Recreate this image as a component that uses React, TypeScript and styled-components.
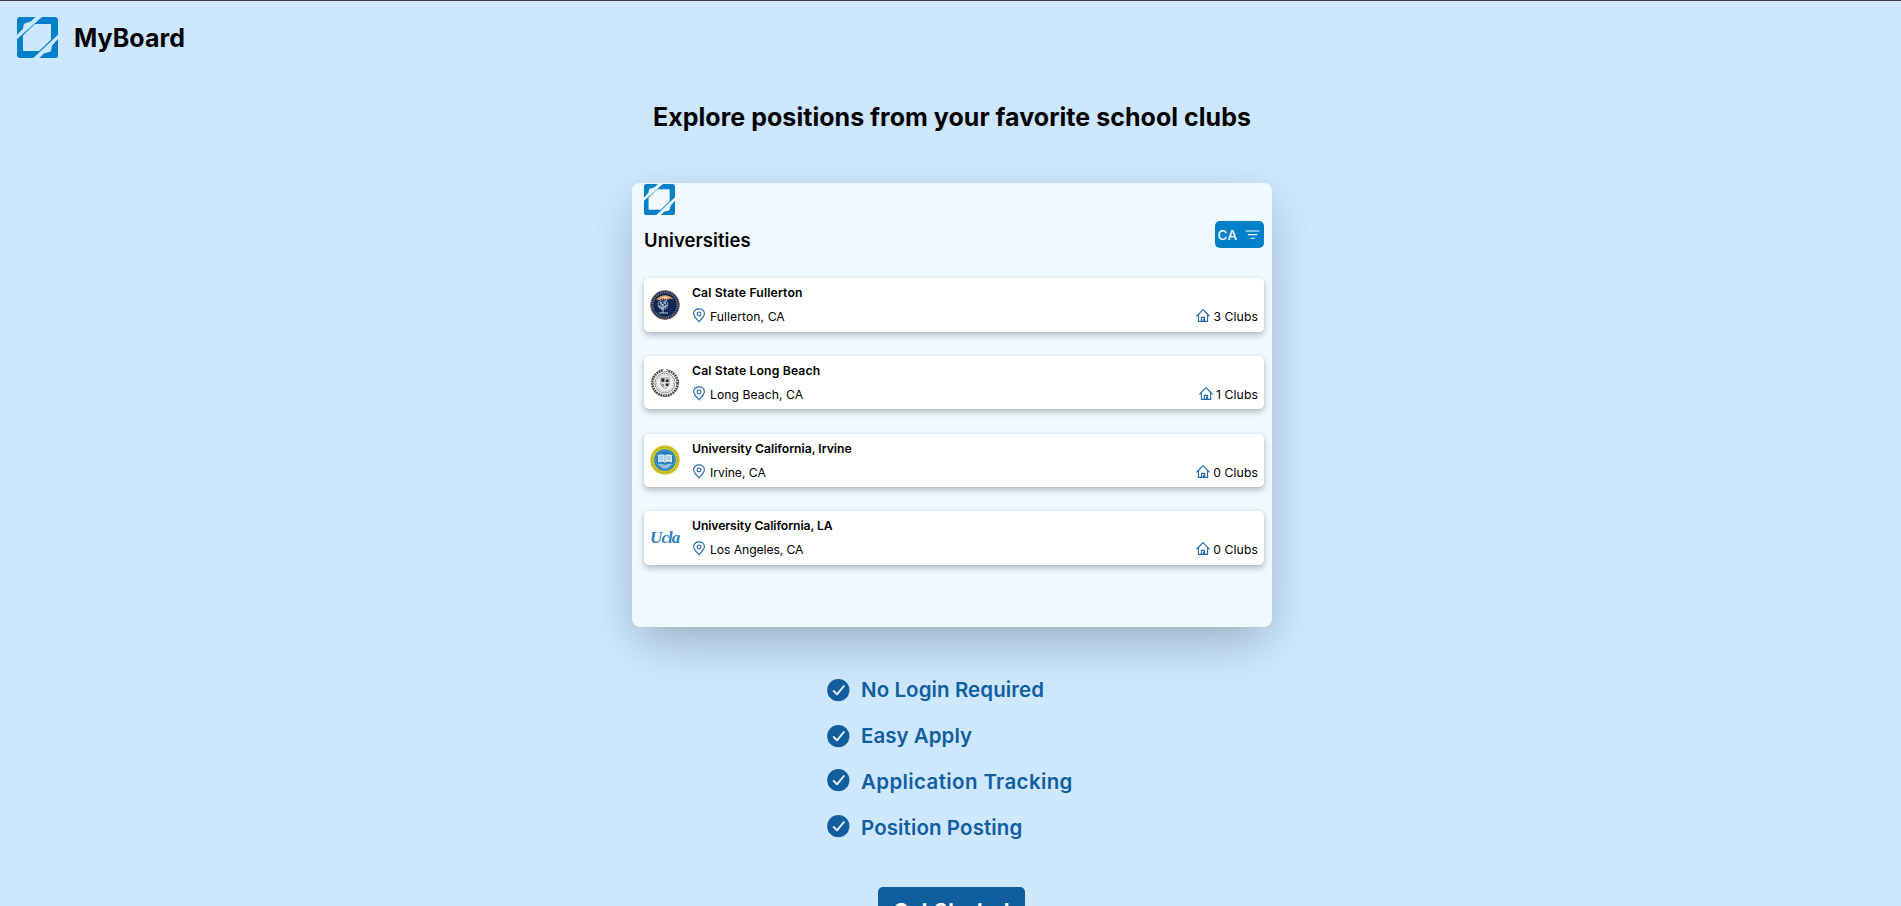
import React from "react";
import styled, { createGlobalStyle } from "styled-components";

const brand = "#0080c9";
const navy = "#115e9f";

const GlobalStyle = createGlobalStyle`
  * { box-sizing: border-box; }
  body {
    margin: 0;
    background: #cde7ff;
    font-family: Inter, "Liberation Sans", sans-serif;
    color: #000;
  }
  svg { display: block; }
`;

const Page = styled.div`
  height: 100vh;
  overflow: hidden;
  border-top: 1px solid #3b3f46;
`;

const Header = styled.header`
  display: flex;
  align-items: center;
  gap: 16.5px;
  padding: 16px 16.5px;
`;

const BrandName = styled.span`
  font-size: 25px;
  line-height: 36px;
  font-weight: 700;
  letter-spacing: 0.05px;
`;

const Main = styled.main`
  display: flex;
  flex-direction: column;
  align-items: center;
  padding-left: 3px;
`;

const Headline = styled.h1`
  margin: 25px 0 48px;
  font-size: 25px;
  line-height: 36px;
  font-weight: 700;
  letter-spacing: 0.03px;
`;

const Preview = styled.section`
  width: 640px;
  height: 444px;
  flex: none;
  padding: 0.5px 8px 0 12px;
  border-radius: 8px;
  background: #f0f9ff;
  box-shadow: 0 25px 50px -12px rgba(0, 0, 0, 0.18), 0 10px 40px rgba(0, 0, 0, 0.1);
`;

const PreviewHead = styled.div`
  display: flex;
  justify-content: space-between;
  align-items: flex-start;
  height: 39px;
  margin: 6.5px 0 18px;
`;

const PreviewTitle = styled.h2`
  margin: 0;
  font-size: 18.5px;
  line-height: 39px;
  font-weight: 600;
  letter-spacing: 0.05px;
`;

const StateFilter = styled.button`
  display: flex;
  align-items: center;
  justify-content: space-between;
  width: 49.5px;
  height: 27px;
  padding: 0 4px 0 3px;
  border: 0;
  border-radius: 5px;
  background: ${brand};
  color: #fff;
  font: 500 13.5px Inter, sans-serif;
  letter-spacing: 0.4px;
`;

const SchoolList = styled.div`
  display: grid;
  gap: 24.2px;
`;

const SchoolCard = styled.article`
  display: flex;
  gap: 12px;
  height: 53.6px;
  padding: 0 6px;
  border-radius: 5px;
  background: #fff;
  box-shadow: 0 3px 6px rgba(0, 0, 0, 0.26), 0 0 3px rgba(0, 0, 0, 0.05);
`;

const Emblem = styled.div`
  display: flex;
  align-items: center;
  width: 30px;
`;

const Script = styled.span`
  font: italic 700 17px "Liberation Serif", serif;
  letter-spacing: -0.9px;
  color: #2c7fbd;
`;

const Details = styled.div`
  flex: 1;
  padding-top: 3px;
`;

const SchoolName = styled.h3<{ $tracking: number }>`
  margin: 0;
  font-size: 12.2px;
  line-height: 24px;
  font-weight: 600;
  letter-spacing: ${(p) => p.$tracking}px;
`;

const Meta = styled.div`
  display: flex;
  justify-content: space-between;
`;

const MetaItem = styled.span<{ $gap: number; $tracking: number }>`
  display: flex;
  gap: ${(p) => p.$gap}px;
  font-size: 12.2px;
  line-height: 24px;
  letter-spacing: ${(p) => p.$tracking}px;
  white-space: nowrap;

  svg { margin-top: 3px; }
`;

const Perks = styled.ul`
  display: grid;
  gap: 16px;
  width: 250px;
  margin: 48px 0 44px;
  padding: 0;
  list-style: none;
`;

const Perk = styled.li<{ $tracking: number; $lift: number }>`
  display: flex;
  gap: 11px;
  font-size: 20.5px;
  line-height: 30px;
  font-weight: 600;
  letter-spacing: ${(p) => p.$tracking}px;
  color: ${navy};
  white-space: nowrap;

  svg {
    flex: none;
    margin-top: ${(p) => 4 - p.$lift}px;
  }
`;

const StartButton = styled.button`
  flex: none;
  width: 147px;
  height: 46px;
  margin-right: 1px;
  padding: 0;
  border: 0;
  border-radius: 5px;
  background: ${navy};
  color: #fff;
  font: 700 20.5px Inter, sans-serif;
  letter-spacing: 0.2px;
`;

const Logo = ({ size }: { size: number }) => (
  <svg width={size} height={size} viewBox="0 0 123 123">
    <g fill={brand}>
      <path d="M10 0H55L43 12C34 17 27 17 22 20C18 24 20 31 17 36L0 54V10Q0 0 10 0Z" />
      <path
        fillRule="evenodd"
        d="M75 0H113Q123 0 123 10V53L49 123H10Q0 123 0 113V66ZM54 21L18 55V102H66L102 68V21Z"
      />
      <path d="M123 66V113Q123 123 113 123H67L79 111C88 105 96 108 101 103C105 98 102 91 106 85Z" />
      <rect x="120" y="121" width="3" height="2" opacity=".5" />
    </g>
  </svg>
);

const FilterIcon = () => (
  <svg width="15" height="10" viewBox="0 0 15 10" stroke="#fff" strokeWidth="1.1" strokeLinecap="round">
    <path d="M1 1H14M3.2 4.6H11.8M5.8 8.2H9.2" />
  </svg>
);

const PinIcon = () => (
  <svg width="14" height="15" viewBox="0 0 14 15" fill="none" stroke="#2369ad" strokeWidth="1.15">
    <path d="M7 13.8C4.6 11.1 1.6 8.4 1.6 5.7C1.6 2.8 4 .9 7 .9S12.4 2.8 12.4 5.7C12.4 8.4 9.4 11.1 7 13.8Z" strokeLinejoin="round" />
    <circle cx="7" cy="5.9" r="1.9" />
  </svg>
);

const HomeIcon = () => (
  <svg width="14" height="15" viewBox="0 0 14 15" fill="none" stroke="#2369ad" strokeWidth="1.1" strokeLinejoin="round" strokeLinecap="round">
    <path d="M.8 8L7 1.7L13.2 8M2.4 6.6V13.4H11.6V6.6M5.4 13.2V9.4H8.6V13.2M7.4 11V13" />
  </svg>
);

const CheckIcon = () => (
  <svg width="23" height="23" viewBox="0 0 23 23">
    <circle cx="11.3" cy="11.2" r="11.1" fill={navy} />
    <path d="M6.7 12L10 15.3L16.8 7.1" fill="none" stroke="#e4f2ff" strokeWidth="1.9" strokeLinecap="round" strokeLinejoin="round" />
  </svg>
);

const FullertonSeal = () => (
  <svg width="30" height="30" viewBox="0 0 30 30">
    <circle cx="15" cy="15" r="14.4" fill="#15284e" stroke="#9a725c" strokeWidth=".9" />
    <circle cx="15" cy="15" r="12.4" fill="none" stroke="#8794a8" strokeWidth="1.5" strokeDasharray="1 1.2" />
    <circle cx="15" cy="15" r="10.6" fill="#0d2855" />
    <path d="M6 9.5Q15 .8 24 9.5L20 8.6L17 10L13 8.4L9 10Z" fill="#f0a058" />
    <path d="M12 7.6Q15 5.5 18 7.6L15 8.6Z" fill="#fbe1c2" />
    <g fill="none" stroke="#b9c7d8" strokeWidth="1.1">
      <path d="M13 23V14M13 19L8.5 16M13 18L17.5 15M13 16L10 12M13 15L16 11M9 23H18" />
      <circle cx="13" cy="14.5" r="4.8" strokeDasharray="1.3 .8" />
      <circle cx="13" cy="14.5" r="2.6" strokeDasharray="1 .6" />
    </g>
  </svg>
);

const LongBeachSeal = () => (
  <svg width="30" height="30" viewBox="0 0 30 30" fill="none">
    <circle cx="15" cy="15" r="12.6" stroke="#444" strokeWidth="2.6" strokeDasharray="1.7 .8" />
    <circle cx="15" cy="15" r="13.6" stroke="#666" strokeWidth=".8" strokeDasharray="2 1.4" />
    <circle cx="15" cy="15" r="10" fill="#f2f2f2" stroke="#777" strokeWidth=".8" />
    <circle cx="15" cy="15" r="8.3" stroke="#aaa" strokeWidth="1.2" strokeDasharray=".8 1" />
    <path d="M10.8 9.8H19.2V16.5Q18.5 19 15 20.5Q11.5 19 10.8 16.5Z" fill="#ddd" stroke="#777" strokeWidth=".6" />
    <path d="M11.5 10.5H14.4V13.8H11.5ZM15.8 11.5H18.5V14H15.8ZM15.8 15.5H18.4V18H15.8Z" fill="#222" />
    <path d="M11.8 16H14V18.2H11.8Z" fill="#888" />
    <path d="M12 3.2L15 0L18 3.2" fill="#fff" />
  </svg>
);

const IrvineSeal = () => (
  <svg width="30" height="30" viewBox="0 0 30 30">
    <circle cx="15" cy="15" r="14.8" fill="#dccf2a" />
    <circle cx="15" cy="15" r="12.8" fill="none" stroke="#868a45" strokeWidth="1.7" strokeDasharray=".9 1.4" />
    <circle cx="15" cy="15" r="10.8" fill="#1c78b8" />
    <circle cx="15" cy="15" r="9.4" fill="none" stroke="#71add5" strokeWidth=".7" />
    <path d="M8 10Q12 8.3 15 10Q18 8.3 22 10V17.5Q18 16 15 18Q12 16 8 17.5Z" fill="#cfe3f1" />
    <path d="M15 10V18M9.5 12H13M9.5 14H13M17 12H20.5M17 14H20.5" stroke="#5d9dc9" strokeWidth=".6" />
    <path d="M7.5 19Q11 17.5 15 20Q19 17.5 22.5 19L18 23Q15 24 12 23Z" fill="#94c1df" />
  </svg>
);

const schools = [
  { name: "Cal State Fullerton", city: "Fullerton, CA", clubs: 3, emblem: <FullertonSeal />, nameTracking: 0.14, cityTracking: 0.05 },
  { name: "Cal State Long Beach", city: "Long Beach, CA", clubs: 1, emblem: <LongBeachSeal />, nameTracking: 0.15, cityTracking: 0.05 },
  { name: "University California, Irvine", city: "Irvine, CA", clubs: 0, emblem: <IrvineSeal />, nameTracking: -0.02, cityTracking: -0.04 },
  { name: "University California, LA", city: "Los Angeles, CA", clubs: 0, emblem: <Script>Ucla</Script>, nameTracking: -0.08, cityTracking: -0.09 },
];

const perks = [
  { label: "No Login Required", tracking: 0.08, lift: 0 },
  { label: "Easy Apply", tracking: 0.03, lift: 0 },
  { label: "Application Tracking", tracking: 0.37, lift: 2 },
  { label: "Position Posting", tracking: 0.1, lift: 2 },
];

export default function App() {
  return (
    <Page>
      <GlobalStyle />
      <Header>
        <Logo size={41} />
        <BrandName>MyBoard</BrandName>
      </Header>
      <Main>
        <Headline>Explore positions from your favorite school clubs</Headline>
        <Preview>
          <Logo size={31} />
          <PreviewHead>
            <PreviewTitle>Universities</PreviewTitle>
            <StateFilter>
              CA <FilterIcon />
            </StateFilter>
          </PreviewHead>
          <SchoolList>
            {schools.map((s) => (
              <SchoolCard key={s.name}>
                <Emblem>{s.emblem}</Emblem>
                <Details>
                  <SchoolName $tracking={s.nameTracking}>{s.name}</SchoolName>
                  <Meta>
                    <MetaItem $gap={4} $tracking={s.cityTracking}>
                      <PinIcon />
                      {s.city}
                    </MetaItem>
                    <MetaItem $gap={3} $tracking={0.1}>
                      <HomeIcon />
                      {s.clubs} Clubs
                    </MetaItem>
                  </Meta>
                </Details>
              </SchoolCard>
            ))}
          </SchoolList>
        </Preview>
        <Perks>
          {perks.map((p) => (
            <Perk key={p.label} $tracking={p.tracking} $lift={p.lift}>
              <CheckIcon />
              {p.label}
            </Perk>
          ))}
        </Perks>
        <StartButton>Get Started</StartButton>
      </Main>
    </Page>
  );
}
